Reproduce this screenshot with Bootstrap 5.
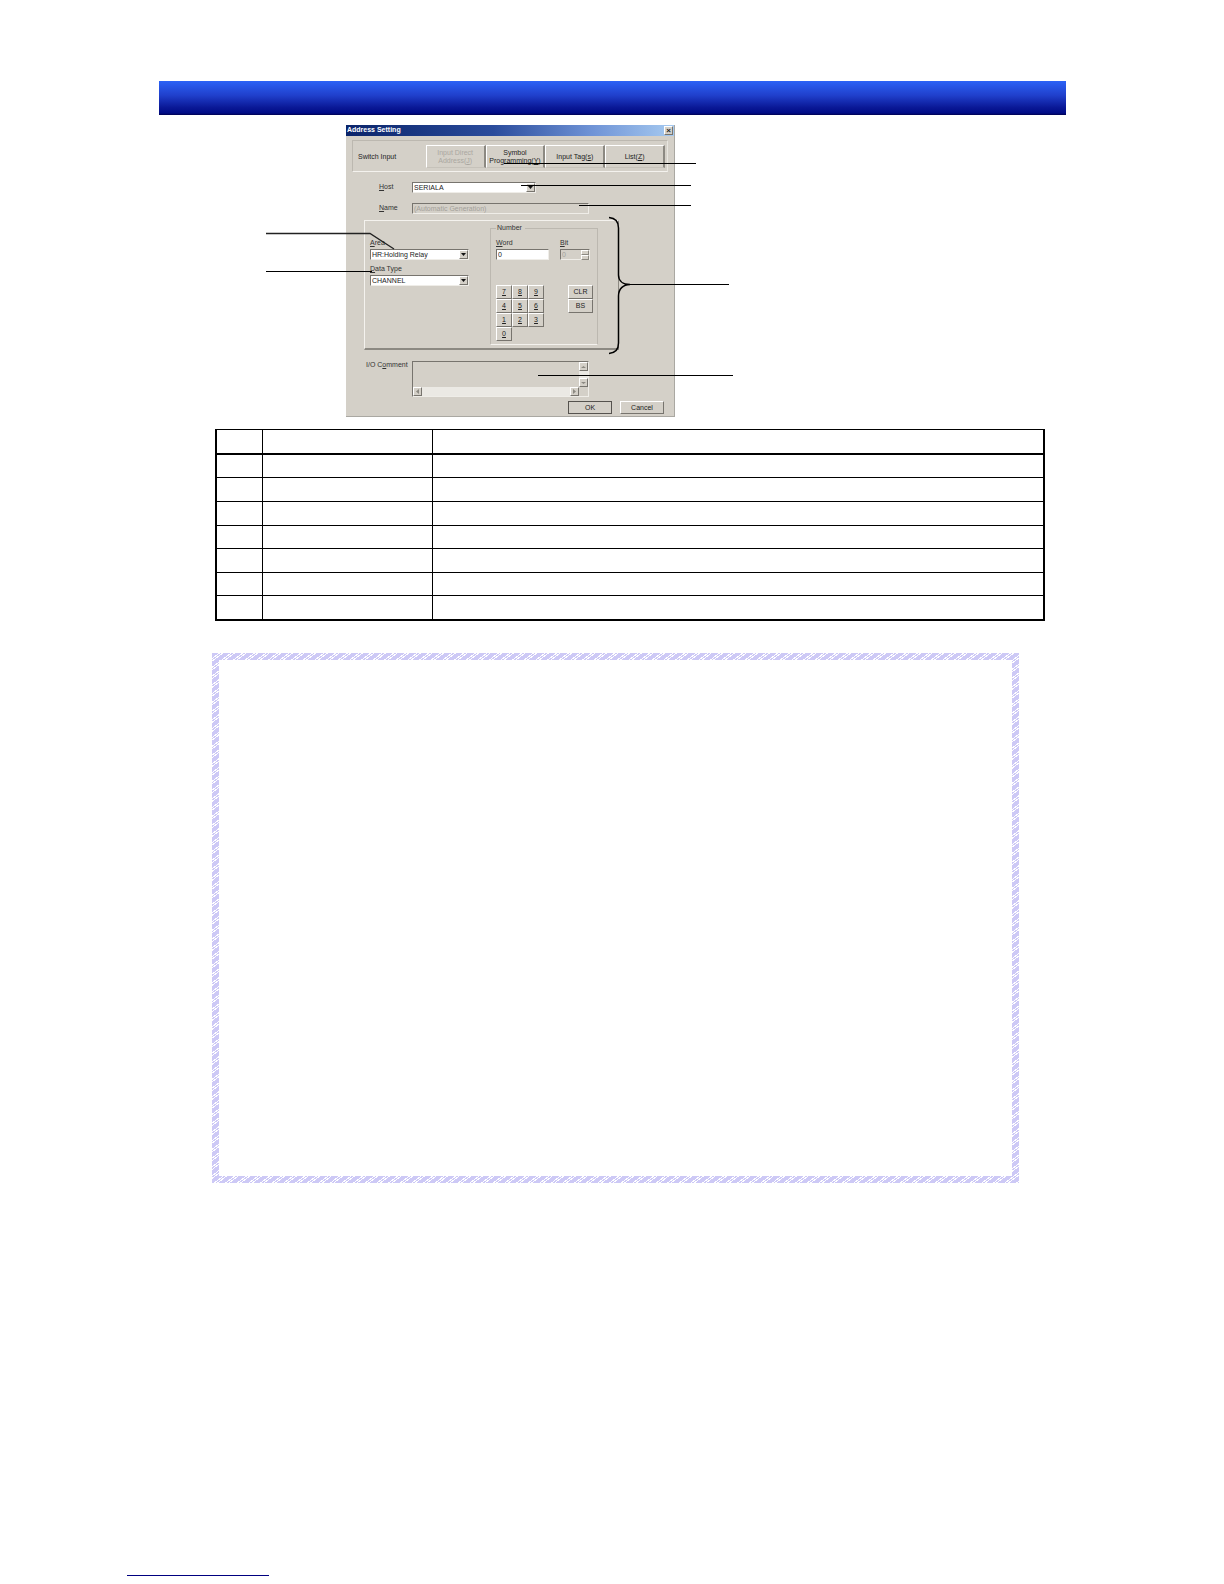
<!DOCTYPE html>
<html lang="en">
<head>
<meta charset="utf-8">
<meta name="viewport" content="width=device-width, initial-scale=1">
<title>Address Setting</title>
<link href="https://cdn.jsdelivr.net/npm/bootstrap@5.3.0/dist/css/bootstrap.min.css" rel="stylesheet">
<style>
  body { background: #fff; color: #000; font-family: "Liberation Sans", Arial, sans-serif; }
  .sheet { padding: 81px 158px 0 159px; }
  .banner { height: 34px; background: linear-gradient(#2b62f6, #2040cc 42%, #0a1896 78%, #000c86 94%, #000050); }
  .figure-area { width: 467px; margin: 10px 0 0 107px; }
  .callouts { top: 0; left: 0; pointer-events: none; }

  .dlg { width: 329px; margin-left: 80px; background: #d4d0c8; font-size: 7px; line-height: 10px; color: #222; border: 0 solid #aaa8a2; border-width: 0 1px 1px 0; }
  .dlg label, .dlg legend { color: #333; }
  .dlg u { text-underline-offset: 1px; }
  .dlg-title { height: 11px; background: linear-gradient(90deg, #0a246a, #2b4c9c 45%, #6f93d6 75%, #a6caf0); color: #fff; font-weight: bold; padding-left: 1px; }
  .raised { background: #d4d0c8; border: 1px solid; border-color: #fff #77746e #77746e #fff; padding: 0; color: #222; line-height: 8px; border-radius: 0; }
  .sunken { background: #fff; border: 1px solid; border-color: #77746e #efede8 #efede8 #77746e; }
  .off, .off input, .off textarea { background: #d4d0c8; color: #a3a09a; }
  .close-box { width: 9px; height: 9px; margin: 1px; line-height: 6px; font-weight: bold; font-size: 8px; }
  .switches { margin: 4px 6px 10px; height: 32px; border: 1px solid; border-color: #bcb8b0 #e8e6e0 #f4f2ee #bcb8b0; padding: 4px 2px 3px 5px; }
  .switches > span { width: 68px; }
  .switches .raised { width: 60px; border-right: 2px solid #8c8982; border-bottom-color: #c6c2ba; }
  .switches .raised:disabled { color: #aaa7a0; }
  .field-row { height: 11px; padding-left: 33px; }
  .field-row label { width: 33px; }
  .field-row + .field-row { margin-top: 10px; }
  .ctl { height: 11px; }
  .ctl select, .ctl input { appearance: none; border: 0; padding: 0 0 0 1px; font-size: 7px; line-height: 9px; height: 9px; min-width: 0; width: 100%; color: #222; background: #fff; border-radius: 0; }
  .ctl.off input { color: #a3a09a; background: #d4d0c8; opacity: 1; }
  .arrow { width: 9px; height: 9px; flex: none; }
  .arrow svg { width: 7px; height: 7px; display: block; }
  .w-host { width: 124px; }
  .w-name { width: 177px; }
  .address { margin: 6px 0 0 18px; width: 255px; height: 130px; border: 1px solid; border-color: #f4f2ee #8c8982 #8c8982 #f4f2ee; border-bottom-width: 2px; padding: 2px 0 0 5px; gap: 21px; }
  .choices { width: 99px; padding-top: 15px; }
  .choices .ctl { margin-top: 1px; }
  .choices .ctl + label { margin-top: 4px; }
  .number-set { width: 108px; height: 122px; border: 1px solid; border-color: #bcb8b0 #bcb8b0 #f4f2ee #bcb8b0; padding: 5px 0 0 5px; margin: 0; min-width: 0; }
  .number-set legend { float: none; width: auto; font-size: 7px; line-height: 10px; margin: 0; padding: 0 3px 0 1px; }
  .number-set .entries { gap: 11px; }
  .w-word { width: 53px; margin-top: 1px; }
  .w-bit { width: 30px; margin-top: 1px; }
  .spin { width: 8px; flex: none; }
  .spin i { height: 5px; display: block; border: 1px solid; border-color: #fff #8c8982 #8c8982 #fff; }
  .pads { margin-top: 25px; gap: 24px; }
  .keys { display: grid; grid-template-columns: repeat(3, 16px); grid-auto-rows: 14px; }
  .side-keys { display: grid; grid-template-columns: 25px; grid-auto-rows: 14px; align-content: start; }
  .comment-row { margin-top: 11px; padding-left: 20px; }
  .comment-row label { width: 46px; line-height: 8px; }
  .comment-box { width: 177px; height: 36px; }
  .comment-box textarea { border: 0; resize: none; padding: 0; font-size: 7px; min-width: 0; overflow: hidden; }
  .track { background: #ebe9e4; }
  .actions { margin-top: 4px; padding: 0 10px 2px 0; gap: 8px; }
  .actions .raised { width: 44px; height: 13px; }
  .actions .default { border-color: #55524e; }

  .parts { margin: 12px 21px 0 56px; }
  .parts table { border-collapse: separate; border-spacing: 0; width: 100%; table-layout: fixed; border: 2px solid #000; border-top-width: 1px; }
  .parts th, .parts td { padding: 0; border: 0 solid #000; border-right-width: 1px; border-bottom-width: 1px; height: 24px; }
  .parts th { height: 25px; border-bottom-width: 2px; }
  .parts tr > :last-child { border-right-width: 0; }
  .parts tbody tr:nth-child(1) td, .parts tbody tr:nth-child(4) td, .parts tbody tr:nth-child(6) td { height: 23px; }
  .parts tbody tr:last-child td { height: 23px; border-bottom-width: 0; }
  .c-no { width: 46px; }
  .c-name { width: 170px; }
  .note { margin: 32px 47px 0 53px; padding: 7px; background: repeating-linear-gradient(143deg, #cdc9f6 0 4px, #fff 4px 5px, #cdc9f6 5px 6px, #fff 6px 7px); }
  .note-body { height: 516px; background: #fff; }
  .foot-rule { width: 142px; height: 1px; margin: 392px 0 8px -32px; background: #000080; }
</style>
<script src="https://cdn.jsdelivr.net/npm/bootstrap@5.3.0/dist/js/bootstrap.bundle.min.js"></script>
</head>
<body>
<main class="sheet">
  <header class="banner"></header>

  <section class="figure-area position-relative">
    <div class="dlg">
      <div class="dlg-title d-flex justify-content-between">
        <span>Address Setting</span>
        <button type="button" class="raised close-box" aria-label="Close">×</button>
      </div>
      <div class="switches d-flex">
        <span class="align-self-center">Switch Input</span>
        <button type="button" class="raised" disabled>Input Direct<br>Address(<u>J</u>)</button>
        <button type="button" class="raised">Symbol<br>Programming(<u>Y</u>)</button>
        <button type="button" class="raised">Input Tag(<u>s</u>)</button>
        <button type="button" class="raised">List(<u>Z</u>)</button>
      </div>
      <div class="field-row d-flex">
        <label for="host"><u>H</u>ost</label>
        <div class="ctl sunken w-host d-flex">
          <select id="host"><option>SERIALA</option></select>
          <span class="arrow raised"><svg viewBox="0 0 7 7"><path d="M1 2h5L3.500 5z" fill="#111"/></svg></span>
        </div>
      </div>
      <div class="field-row d-flex">
        <label for="name"><u>N</u>ame</label>
        <div class="ctl sunken off w-name d-flex"><input id="name" type="text" value="(Automatic Generation)" disabled></div>
      </div>
      <div class="address d-flex">
        <div class="choices d-flex flex-column">
          <label for="area"><u>A</u>rea</label>
          <div class="ctl sunken d-flex">
            <select id="area"><option>HR:Holding Relay</option></select>
            <span class="arrow raised"><svg viewBox="0 0 7 7"><path d="M1 2h5L3.500 5z" fill="#111"/></svg></span>
          </div>
          <label for="dtype"><u>D</u>ata Type</label>
          <div class="ctl sunken d-flex">
            <select id="dtype"><option>CHANNEL</option></select>
            <span class="arrow raised"><svg viewBox="0 0 7 7"><path d="M1 2h5L3.500 5z" fill="#111"/></svg></span>
          </div>
        </div>
        <fieldset class="number-set">
          <legend>Number</legend>
          <div class="entries d-flex">
            <div class="d-flex flex-column">
              <label for="word"><u>W</u>ord</label>
              <div class="ctl sunken w-word d-flex"><input id="word" type="text" value="0"></div>
            </div>
            <div class="off d-flex flex-column">
              <label for="bit" class="off"><u>B</u>it</label>
              <div class="ctl sunken off w-bit d-flex"><input id="bit" type="text" value="0" disabled><span class="spin"><i></i><i></i></span></div>
            </div>
          </div>
          <div class="pads d-flex">
            <div class="keys">
              <button type="button" class="raised"><u>7</u></button><button type="button" class="raised"><u>8</u></button><button type="button" class="raised"><u>9</u></button>
              <button type="button" class="raised"><u>4</u></button><button type="button" class="raised"><u>5</u></button><button type="button" class="raised"><u>6</u></button>
              <button type="button" class="raised"><u>1</u></button><button type="button" class="raised"><u>2</u></button><button type="button" class="raised"><u>3</u></button>
              <button type="button" class="raised"><u>0</u></button>
            </div>
            <div class="side-keys">
              <button type="button" class="raised">CLR</button>
              <button type="button" class="raised">BS</button>
            </div>
          </div>
        </fieldset>
      </div>
      <div class="comment-row d-flex">
        <label for="comment">I/O C<u>o</u>mment</label>
        <div class="comment-box sunken off d-flex flex-column">
          <div class="d-flex flex-grow-1">
            <textarea id="comment" class="flex-grow-1 h-100" rows="1" disabled></textarea>
            <div class="d-flex flex-column justify-content-between track">
              <span class="arrow raised"><svg viewBox="0 0 7 7"><path d="M1 5h5L3.500 3z" fill="#8c8982"/></svg></span>
              <span class="arrow raised"><svg viewBox="0 0 7 7"><path d="M1 3h5L3.500 5z" fill="#8c8982"/></svg></span>
            </div>
          </div>
          <div class="d-flex">
            <div class="track d-flex flex-grow-1 justify-content-between">
              <span class="arrow raised"><svg viewBox="0 0 7 7"><path d="M5 1v5L2 3.500z" fill="#8c8982"/></svg></span>
              <span class="arrow raised"><svg viewBox="0 0 7 7"><path d="M2 1v5L5 3.500z" fill="#8c8982"/></svg></span>
            </div>
            <span class="arrow"></span>
          </div>
        </div>
      </div>
      <div class="actions d-flex justify-content-end">
        <button type="button" class="raised default">OK</button>
        <button type="button" class="raised">Cancel</button>
      </div>
    </div>
    <svg class="callouts position-absolute" width="467" height="292" viewBox="0 0 467 292" fill="none" stroke="#000">
      <path d="M0 108.500H104L128 124" stroke="#222" stroke-width="1.300"/>
      <path d="M0 146.500H106M238 38.500H430M255 60.500H425M313 80.500H425M364 159.500H463M272 250.500H467"/>
      <path d="M343 92.500C349 93 352.500 96 352.500 103V150C352.500 156 357 159.500 364 159.500C357 159.500 352.500 164 352.500 171V218C352.500 224 349 228 343 228.500" stroke-width="1.500"/>
    </svg>
  </section>

  <section class="parts">
    <table>
      <colgroup><col class="c-no"><col class="c-name"><col></colgroup>
      <thead><tr><th></th><th></th><th></th></tr></thead>
      <tbody>
        <tr><td></td><td></td><td></td></tr>
        <tr><td></td><td></td><td></td></tr>
        <tr><td></td><td></td><td></td></tr>
        <tr><td></td><td></td><td></td></tr>
        <tr><td></td><td></td><td></td></tr>
        <tr><td></td><td></td><td></td></tr>
        <tr><td></td><td></td><td></td></tr>
      </tbody>
    </table>
  </section>

  <section class="note"><div class="note-body"></div></section>
  <div class="foot-rule"></div>
</main>
</body>
</html>
